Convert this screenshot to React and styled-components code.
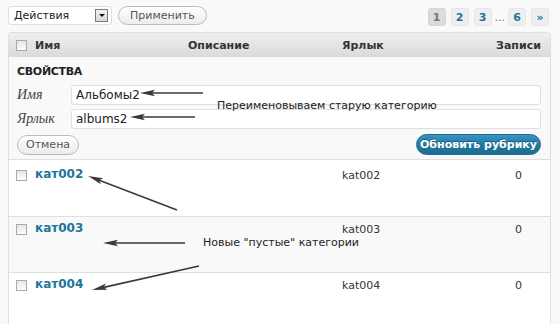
import styled, { createGlobalStyle } from "styled-components";

const GlobalStyle = createGlobalStyle`
  html, body {
    margin: 0;
    padding: 0;
    background: #f9f9f9;
  }
  body {
    font-family: "DejaVu Sans", Verdana, sans-serif;
    font-size: 11px;
    color: #333;
  }
`;

const Page = styled.div`
  position: relative;
  width: 560px;
  height: 324px;
  overflow: hidden;
  padding: 5px 0 0 8px;
  box-sizing: border-box;
`;

const TopBar = styled.div`
  display: flex;
  align-items: center;
  height: 20px;
  width: 541px;
  margin-bottom: 7px;
`;

const FakeSelect = styled.div`
  display: flex;
  align-items: center;
  justify-content: space-between;
  box-sizing: border-box;
  width: 104px;
  height: 19px;
  padding: 0 3px 0 5px;
  background: #fff;
  border: 1px solid #dfdfdf;
  border-radius: 3px;
  color: #222;
  font-size: 11px;
`;

const SelectArrow = styled.span`
  display: flex;
  align-items: center;
  justify-content: center;
  box-sizing: border-box;
  width: 13px;
  height: 13px;
  border: 1px solid #7a7a7a;
  background: linear-gradient(#f4f4f4, #d8d8d8);
  &::after {
    content: "";
    border-left: 3px solid transparent;
    border-right: 3px solid transparent;
    border-top: 3px solid #111;
  }
`;

const PillButton = styled.button`
  box-sizing: border-box;
  height: ${(p) => p.$h || 19}px;
  padding: 0 ${(p) => p.$px || 11}px;
  margin-left: ${(p) => p.$ml || 0}px;
  border: 1px solid #bbb;
  border-radius: 11px;
  background: linear-gradient(#ffffff, #ececec);
  color: #555;
  font-family: "DejaVu Sans", Verdana, sans-serif;
  font-size: 11px;
  line-height: 1;
`;

const PrimaryButton = styled.button`
  box-sizing: border-box;
  height: 21px;
  width: 125px;
  padding: 0;
  border: 1px solid #1f6a8d;
  border-radius: 11px;
  background: linear-gradient(#3594c4, #21759b 60%, #1e6d92);
  color: #fff;
  font-family: "DejaVu Sans", Verdana, sans-serif;
  font-size: 11px;
  font-weight: bold;
  text-shadow: 0 -1px 0 #1a5a78;
`;

const Pager = styled.div`
  display: flex;
  align-items: center;
  gap: 5px;
  margin-left: auto;
  margin-top: 4px;
`;

const PageLink = styled.span`
  display: flex;
  align-items: center;
  justify-content: center;
  box-sizing: border-box;
  width: 18px;
  height: 18px;
  border-radius: 3px;
  border: 1px solid ${(p) => (p.$current ? "#d5d5d5" : "#e6e6e6")};
  background: ${(p) => (p.$current ? "#dcdcdc" : "#efefef")};
  color: ${(p) => (p.$current ? "#777" : "#21759b")};
  font-weight: bold;
  font-size: 11px;
`;

const Dots = styled.span`
  color: #777;
  font-size: 11px;
  margin: 0 -2px;
`;

const Table = styled.div`
  width: 543px;
  box-sizing: border-box;
  border: 1px solid #dfdfdf;
  border-bottom: none;
  border-radius: 4px 4px 0 0;
  background: #fff;
  overflow: hidden;
`;

const Cols = styled.div`
  display: grid;
  grid-template-columns: 26px 153px 154px 145px 1fr;
`;

const HeadRow = styled(Cols)`
  height: 24px;
  align-items: center;
  background: linear-gradient(#efefef, #dadada);
  font-weight: bold;
  color: #333;
  font-size: 11px;
`;

const CheckCell = styled.div`
  padding-left: 7px;
  display: flex;
`;

const Check = styled.span`
  display: block;
  box-sizing: border-box;
  width: 11px;
  height: 11px;
  border: 1px solid #a9a9a9;
  background: linear-gradient(#e6e6e6, #fdfdfd);
`;

const CenterCell = styled.div`
  text-align: center;
`;

const EditPanel = styled.div`
  background: #f9f9f9;
  border-bottom: 1px solid #dfdfdf;
  padding: 8px 9px 4px 8px;
`;

const EditTitle = styled.div`
  font-weight: bold;
  font-size: 11px;
  color: #222;
  margin-bottom: 7px;
  letter-spacing: -0.3px;
`;

const Field = styled.div`
  display: flex;
  align-items: center;
  margin-bottom: ${(p) => p.$mb || 4}px;
`;

const FieldLabel = styled.label`
  width: 54px;
  font-family: "Liberation Serif", "DejaVu Serif", serif;
  font-style: italic;
  font-size: 14px;
  color: #444;
`;

const TextInput = styled.input`
  flex: 1;
  box-sizing: border-box;
  height: 20px;
  border: 1px solid #dfdfdf;
  border-radius: 3px;
  background: #fff;
  padding: 0 4px;
  font-family: "DejaVu Sans", Verdana, sans-serif;
  font-size: 12px;
  color: #222;
  outline: none;
`;

const EditActions = styled.div`
  display: flex;
  justify-content: space-between;
  align-items: center;
  margin-top: 5px;
`;

const Row = styled(Cols)`
  height: ${(p) => (p.$first ? 57 : 56)}px;
  box-sizing: border-box;
  padding-top: ${(p) => (p.$first ? 9 : 6)}px;
  align-items: start;
  background: ${(p) => (p.$alt ? "#f9f9f9" : "#fff")};
  border-bottom: 1px solid #dfdfdf;
  font-size: 11px;
  color: #333;
`;

const RowCheck = styled(CheckCell)`
  padding-top: 1px;
`;

const CatName = styled.a`
  margin-top: -2px;
  color: #21759b;
  font-weight: bold;
  font-size: 12px;
  text-decoration: none;
`;

const Note = styled.div`
  position: absolute;
  left: ${(p) => p.$x}px;
  top: ${(p) => p.$y}px;
  font-size: 11px;
  color: #222;
  white-space: nowrap;
`;

const Overlay = styled.svg`
  position: absolute;
  left: 0;
  top: 0;
  pointer-events: none;
`;

const arrows = [
  [203, 93, 140, 93],
  [195, 117, 130, 117],
  [177, 210, 88, 176],
  [185, 243, 103, 243],
  [199, 266, 92, 290],
];

function Arrow({ x1, y1, x2, y2 }) {
  const dx = x2 - x1;
  const dy = y2 - y1;
  const len = Math.hypot(dx, dy);
  const ux = dx / len;
  const uy = dy / len;
  const hl = 15;
  const hw = 3.2;
  const bx = x2 - ux * hl;
  const by = y2 - uy * hl;
  const pts = `${x2},${y2} ${bx - uy * hw},${by + ux * hw} ${bx + ux * 3},${by + uy * 3} ${bx + uy * hw},${by - ux * hw}`;
  return (
    <g>
      <line x1={x1} y1={y1} x2={bx + ux * 3} y2={by + uy * 3} stroke="#3a3a3a" strokeWidth="1.6" />
      <polygon points={pts} fill="#3a3a3a" />
    </g>
  );
}

const rows = [
  { name: "кат002", slug: "kat002", count: 0 },
  { name: "кат003", slug: "kat003", count: 0 },
  { name: "кат004", slug: "kat004", count: 0 },
];

export default function App() {
  return (
    <>
      <GlobalStyle />
      <Page>
        <TopBar>
          <FakeSelect>
            Действия
            <SelectArrow />
          </FakeSelect>
          <PillButton $ml={6}>Применить</PillButton>
          <Pager>
            <PageLink $current>1</PageLink>
            <PageLink>2</PageLink>
            <PageLink>3</PageLink>
            <Dots>...</Dots>
            <PageLink>6</PageLink>
            <PageLink>»</PageLink>
          </Pager>
        </TopBar>

        <Table>
          <HeadRow>
            <CheckCell>
              <Check />
            </CheckCell>
            <div>Имя</div>
            <div>Описание</div>
            <div>Ярлык</div>
            <CenterCell>Записи</CenterCell>
          </HeadRow>

          <EditPanel>
            <EditTitle>СВОЙСТВА</EditTitle>
            <Field>
              <FieldLabel>Имя</FieldLabel>
              <TextInput value="Альбомы2" readOnly />
            </Field>
            <Field $mb={0}>
              <FieldLabel>Ярлык</FieldLabel>
              <TextInput value="albums2" readOnly />
            </Field>
            <EditActions>
              <PillButton $h={20} $px={8}>Отмена</PillButton>
              <PrimaryButton>Обновить рубрику</PrimaryButton>
            </EditActions>
          </EditPanel>

          {rows.map((r, i) => (
            <Row key={r.slug} $alt={i === 1} $first={i === 0}>
              <RowCheck>
                <Check />
              </RowCheck>
              <CatName href="#">{r.name}</CatName>
              <div />
              <div>{r.slug}</div>
              <CenterCell>{r.count}</CenterCell>
            </Row>
          ))}
        </Table>

        <Overlay width="560" height="324" viewBox="0 0 560 324">
          {arrows.map(([x1, y1, x2, y2], i) => (
            <Arrow key={i} x1={x1} y1={y1} x2={x2} y2={y2} />
          ))}
        </Overlay>
        <Note $x={217} $y={99}>Переименовываем старую категорию</Note>
        <Note $x={203} $y={236}>Новые "пустые" категории</Note>
      </Page>
    </>
  );
}
